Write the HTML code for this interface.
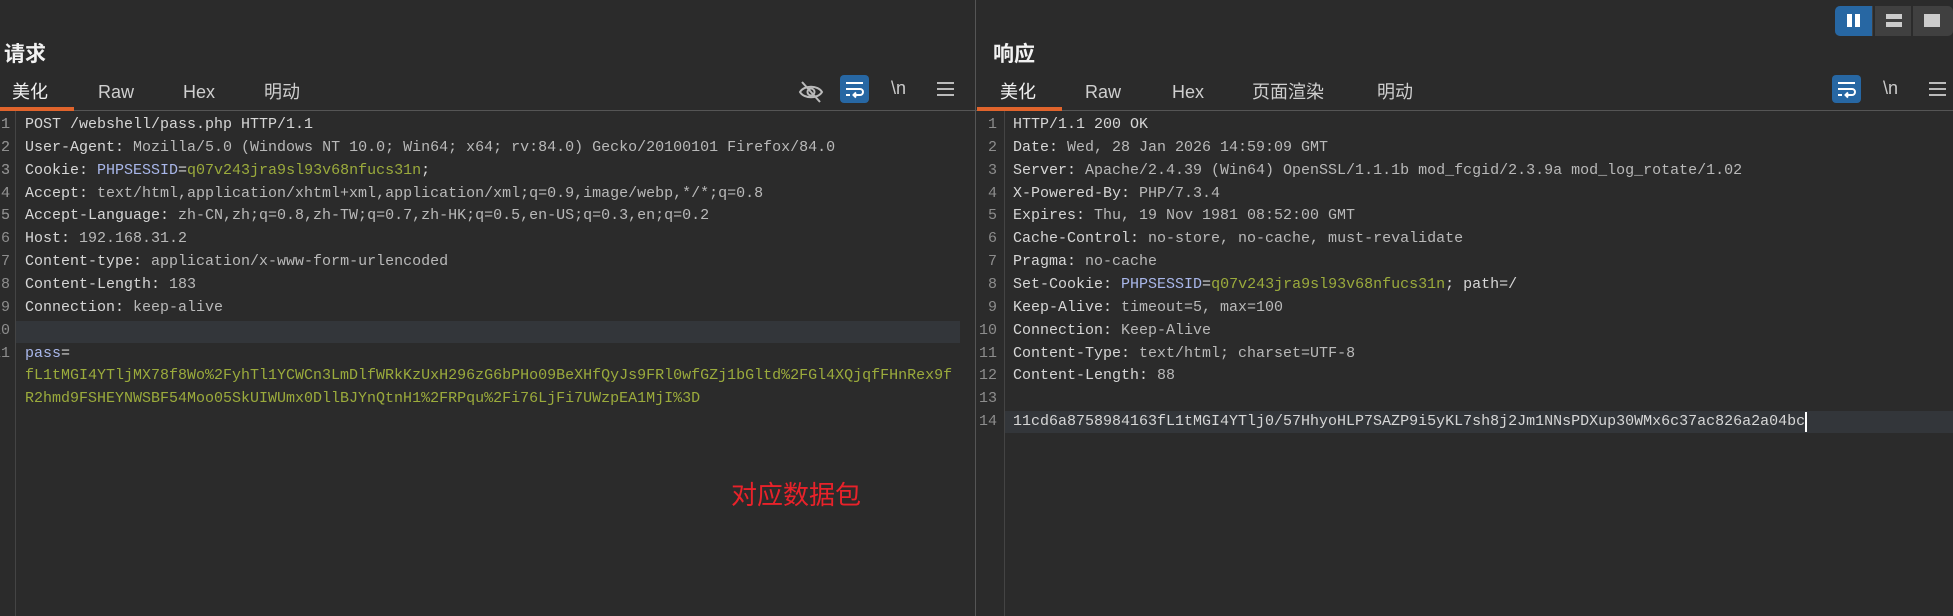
<!DOCTYPE html>
<html><head><meta charset="utf-8"><style>
*{margin:0;padding:0;box-sizing:border-box}
body{width:1953px;height:616px;background:#2b2b2b;overflow:hidden;position:relative;font-family:"Liberation Sans","Noto Sans CJK SC",sans-serif;color:#d6d6d6}
.abs{position:absolute}
.h{font-size:21px;font-weight:bold;color:#f2f2f2;top:38px}
.tab{position:absolute;top:80px;font-size:18px;color:#cfcfcf;line-height:24px}
.sep{position:absolute;top:110px;height:1px;background:#555}
.ul{position:absolute;top:107px;height:4px;background:#e0642c}
.code{position:absolute;font-family:"Liberation Mono","Noto Sans CJK SC",monospace;font-size:15px;line-height:22.86px;white-space:pre;color:#d6d6d6}
.ln{position:absolute;font-family:"Liberation Mono",monospace;font-size:15px;line-height:22.86px;color:#8d8d8d;text-align:right;white-space:pre}
.v{color:#b9b9b9}.k{color:#a9b7ea}.g{color:#9bab3c}
.gut{position:absolute;top:111px;bottom:0;width:1px;background:#444}
.btn{position:absolute;top:75px;width:29px;height:28px;background:#2767a3;border-radius:4px}
</style></head><body>
<!-- segmented control -->
<div class="abs" style="left:1835px;top:6px;width:118px;height:30px;background:#404040;border-radius:5px;overflow:hidden">
 <div class="abs" style="left:0;top:0;width:37px;height:30px;background:#2767a3"></div>
 <div class="abs" style="left:12px;top:8px;width:5px;height:13px;background:#fff"></div>
 <div class="abs" style="left:20px;top:8px;width:5px;height:13px;background:#fff"></div>
 <div class="abs" style="left:38px;top:0;width:2px;height:30px;background:#2b2b2b"></div>
 <div class="abs" style="left:51px;top:8px;width:16px;height:5px;background:#ccc"></div>
 <div class="abs" style="left:51px;top:16px;width:16px;height:5px;background:#ccc"></div>
 <div class="abs" style="left:76px;top:0;width:2px;height:30px;background:#2b2b2b"></div>
 <div class="abs" style="left:89px;top:8px;width:16px;height:13px;background:#ccc"></div>
</div>
<!-- divider -->
<div class="abs" style="left:975px;top:0;width:1px;height:616px;background:#555"></div>

<!-- LEFT -->
<div class="abs h" style="left:4px">请求</div>
<div class="tab" style="left:12px;color:#f0f0f0">美化</div>
<div class="tab" style="left:98px">Raw</div>
<div class="tab" style="left:183px">Hex</div>
<div class="tab" style="left:264px">明动</div>
<div class="sep" style="left:0;width:975px"></div>
<div class="ul" style="left:0;width:74px"></div>
<svg class="abs" style="left:798px;top:80px" width="26" height="24" viewBox="0 0 26 24"><path d="M2 12 C6 5 20 5 24 12 C20 19 6 19 2 12Z" fill="none" stroke="#bbb" stroke-width="2"/><circle cx="13" cy="12" r="3.5" fill="none" stroke="#bbb" stroke-width="2"/><path d="M4 2 L22 22" stroke="#bbb" stroke-width="2"/></svg>
<div class="btn" style="left:840px"></div>
<svg class="abs" style="left:840px;top:75px" width="29" height="28" viewBox="0 0 29 28"><path d="M6 8H23M6 14H20a3 3 0 0 1 0 6H14M16 17.5L13.5 20L16 22.5M6 20H10" fill="none" stroke="#fff" stroke-width="2"/></svg>
<div class="abs" style="left:891px;top:78px;font-size:18px;color:#ccc">\n</div>
<svg class="abs" style="left:936px;top:81px" width="19" height="16"><path d="M1 2H18M1 8H18M1 14H18" stroke="#bbb" stroke-width="2"/></svg>

<div class="gut" style="left:15px"></div>
<div class="abs" style="left:16px;top:321px;width:944px;height:22px;background:#33363a"></div>
<div class="abs" style="left:0;top:114px;width:14px;height:120px;overflow:hidden"><div class="ln" style="right:4px;top:0">1
2
3
4
5
6
7
8
9
10
11</div></div>
<div class="ln" style="left:-15px;width:25px;top:114px">1
2
3
4
5
6
7
8
9
10
11</div>
<div class="code" style="left:25px;top:114px">POST /webshell/pass.php HTTP/1.1
User-Agent:<span class="v"> Mozilla/5.0 (Windows NT 10.0; Win64; x64; rv:84.0) Gecko/20100101 Firefox/84.0</span>
Cookie: <span class="k">PHPSESSID</span>=<span class="g">q07v243jra9sl93v68nfucs31n</span>;
Accept:<span class="v"> text/html,application/xhtml+xml,application/xml;q=0.9,image/webp,*/*;q=0.8</span>
Accept-Language:<span class="v"> zh-CN,zh;q=0.8,zh-TW;q=0.7,zh-HK;q=0.5,en-US;q=0.3,en;q=0.2</span>
Host:<span class="v"> 192.168.31.2</span>
Content-type:<span class="v"> application/x-www-form-urlencoded</span>
Content-Length:<span class="v"> 183</span>
Connection:<span class="v"> keep-alive</span>

<span class="k">pass</span>=
<span class="g">fL1tMGI4YTljMX78f8Wo%2FyhTl1YCWCn3LmDlfWRkKzUxH296zG6bPHo09BeXHfQyJs9FRl0wfGZj1bGltd%2FGl4XQjqfFHnRex9f</span>
<span class="g">R2hmd9FSHEYNWSBF54Moo05SkUIWUmx0DllBJYnQtnH1%2FRPqu%2Fi76LjFi7UWzpEA1MjI%3D</span></div>
<div class="abs" style="left:731px;top:475px;font-size:26px;color:#e8222a;font-family:'Noto Sans CJK SC',sans-serif">对应数据包</div>

<!-- RIGHT -->
<div class="abs h" style="left:993px">响应</div>
<div class="tab" style="left:1000px;color:#f0f0f0">美化</div>
<div class="tab" style="left:1085px">Raw</div>
<div class="tab" style="left:1172px">Hex</div>
<div class="tab" style="left:1252px">页面渲染</div>
<div class="tab" style="left:1377px">明动</div>
<div class="sep" style="left:976px;width:977px"></div>
<div class="ul" style="left:977px;width:85px"></div>
<div class="btn" style="left:1832px"></div>
<svg class="abs" style="left:1832px;top:75px" width="29" height="28" viewBox="0 0 29 28"><path d="M6 8H23M6 14H20a3 3 0 0 1 0 6H14M16 17.5L13.5 20L16 22.5M6 20H10" fill="none" stroke="#fff" stroke-width="2"/></svg>
<div class="abs" style="left:1883px;top:78px;font-size:18px;color:#ccc">\n</div>
<svg class="abs" style="left:1928px;top:81px" width="19" height="16"><path d="M1 2H18M1 8H18M1 14H18" stroke="#bbb" stroke-width="2"/></svg>

<div class="gut" style="left:1004px"></div>
<div class="abs" style="left:1005px;top:411px;width:948px;height:22px;background:#33363a"></div>
<div class="ln" style="left:970px;width:27px;top:114px">1
2
3
4
5
6
7
8
9
10
11
12
13
14</div>
<div class="code" style="left:1013px;top:114px">HTTP/1.1 200 OK
Date:<span class="v"> Wed, 28 Jan 2026 14:59:09 GMT</span>
Server:<span class="v"> Apache/2.4.39 (Win64) OpenSSL/1.1.1b mod_fcgid/2.3.9a mod_log_rotate/1.02</span>
X-Powered-By:<span class="v"> PHP/7.3.4</span>
Expires:<span class="v"> Thu, 19 Nov 1981 08:52:00 GMT</span>
Cache-Control:<span class="v"> no-store, no-cache, must-revalidate</span>
Pragma:<span class="v"> no-cache</span>
Set-Cookie: <span class="k">PHPSESSID</span>=<span class="g">q07v243jra9sl93v68nfucs31n</span>; path=/
Keep-Alive:<span class="v"> timeout=5, max=100</span>
Connection:<span class="v"> Keep-Alive</span>
Content-Type:<span class="v"> text/html; charset=UTF-8</span>
Content-Length:<span class="v"> 88</span>

11cd6a8758984163fL1tMGI4YTlj0/57HhyoHLP7SAZP9i5yKL7sh8j2Jm1NNsPDXup30WMx6c37ac826a2a04bc</div>
<div class="abs" style="left:1805px;top:412px;width:2px;height:20px;background:#fff"></div>
</body></html>
